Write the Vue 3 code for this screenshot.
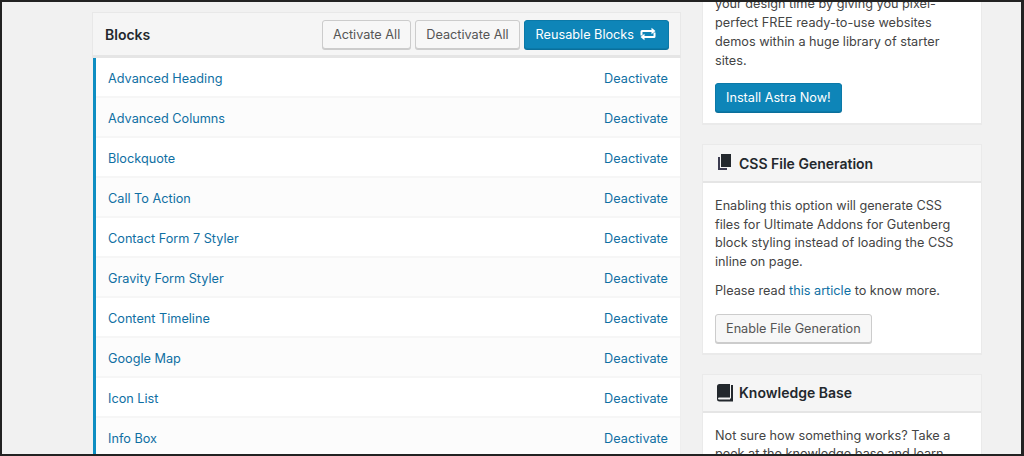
<template>
  <div class="frame">
    <div class="page">
      <main class="blocks">
        <header class="blocks-head">
          <h2>Blocks</h2>
          <div class="actions">
            <button class="btn">Activate All</button>
            <button class="btn">Deactivate All</button>
            <button class="btn primary reusable">
              Reusable Blocks
              <svg class="repeat" width="16" height="14" viewBox="0 0 16 14">
                <path d="M0.500 8.500V4.500A1.500 1.500 0 0 1 2 3H11.500V0.800L15.500 4L11.500 7.200V5H2.500V8.500Z" fill="#fff" />
                <path d="M15.500 5.500V9.500A1.500 1.500 0 0 1 14 11H4.500V13.200L0.500 10L4.500 6.800V9H13.500V5.500Z" fill="#fff" />
              </svg>
            </button>
          </div>
        </header>
        <ul class="rows">
          <li v-for="(name, i) in blocks" :key="name" class="row" :class="{ odd: i % 2 === 1 }">
            <a>{{ name }}</a>
            <a>Deactivate</a>
          </li>
        </ul>
      </main>

      <aside class="side">
        <section class="card first">
          <div class="card-body">
            <p>your design time by giving you pixel-perfect FREE ready-to-use websites demos within a huge library of starter sites.</p>
            <button class="btn primary">Install Astra Now!</button>
          </div>
        </section>

        <section class="card">
          <h3 class="card-head">
            <svg width="18" height="18" viewBox="0 0 18 18">
              <path d="M5 0H15V13H5Z" fill="#23282d" />
              <path d="M2 3H4V14H11V16H2Z" fill="#3c3c50" />
            </svg>
            CSS File Generation
          </h3>
          <div class="card-body">
            <p>Enabling this option will generate CSS files for Ultimate Addons for Gutenberg block styling instead of loading the CSS inline on page.</p>
            <p class="more">Please read <a>this article</a> to know more.</p>
            <button class="btn">Enable File Generation</button>
          </div>
        </section>

        <section class="card">
          <h3 class="card-head">
            <svg width="18" height="18" viewBox="0 0 18 18">
              <path d="M1 2.500A2.500 2.500 0 0 1 3.500 0H14V13.500H3.500C2.500 13.500 2 14 2 14.500C2 15 2.500 15.500 3.500 15.500H14V14.500H15V1H17V17.500H3.500A2.500 2.500 0 0 1 1 15Z" fill="#23282d" />
            </svg>
            Knowledge Base
          </h3>
          <div class="card-body">
            <p>Not sure how something works? Take a peek at the knowledge base and learn more about it.</p>
          </div>
        </section>
      </aside>
    </div>
  </div>
</template>

<script setup>
const blocks = [
  'Advanced Heading',
  'Advanced Columns',
  'Blockquote',
  'Call To Action',
  'Contact Form 7 Styler',
  'Gravity Form Styler',
  'Content Timeline',
  'Google Map',
  'Icon List',
  'Info Box',
]
</script>

<style>
html,
body {
  margin: 0;
  background: #f1f1f1;
}
</style>

<style scoped>
.frame {
  box-sizing: border-box;
  width: 1024px;
  height: 456px;
  overflow: hidden;
  border: solid #222;
  border-width: 2px 3px 2px 2px;
  background: #f1f1f1;
  font-family: Inter, "Liberation Sans", sans-serif;
  font-size: 12.7px;
  color: #444;
}

.page {
  display: flex;
  align-items: flex-start;
  gap: 21px;
  padding: 10px 0 0 90px;
}

.blocks {
  width: 589px;
  flex-shrink: 0;
}

.blocks-head {
  box-sizing: border-box;
  height: 46px;
  display: flex;
  align-items: center;
  justify-content: space-between;
  padding: 0 11px 0 12px;
  background: #f5f5f5;
  border: 1px solid #e8e8e8;
  border-bottom: 3px solid #e5e5e5;
}

h2 {
  margin: 0;
  font-size: 14px;
  font-weight: 600;
  color: #23282d;
}

.actions {
  display: flex;
  gap: 4px;
}

.btn {
  box-sizing: border-box;
  height: 29px;
  padding: 0 10px;
  font: inherit;
  color: #555;
  background: #f7f7f7;
  border: 1px solid #ccc;
  border-radius: 3px;
  box-shadow: 0 1px 0 #ccc;
  white-space: nowrap;
  display: inline-flex;
  align-items: center;
}

.btn.primary {
  color: #fff;
  background: #0e85b8;
  border-color: #0b79a8;
  box-shadow: 0 1px 0 #0a6f9b;
}

.btn.reusable {
  padding: 0 12px 0 11px;
}

.repeat {
  margin-left: 6px;
}

.rows {
  list-style: none;
  margin: 0 0 0 1px;
  padding: 0;
  background: #fff;
  border-left: 3px solid #0e8ec2;
  border-right: 1px solid #eee;
}

.row {
  box-sizing: border-box;
  height: 40px;
  display: flex;
  align-items: center;
  justify-content: space-between;
  padding: 0 12px;
  box-shadow: inset 0 -2px 0 #f6f6f6;
}

.row.odd {
  background: #fcfcfc;
}

a {
  color: #0f6fa3;
}

.side {
  width: 280px;
  margin-top: -3px;
  display: flex;
  flex-direction: column;
  gap: 19px;
}

.card {
  background: #fff;
  border: 1px solid #eaeaea;
  border-bottom-width: 2px;
}

.card.first {
  border-top: 0;
  margin-top: -15px;
}

.card-head {
  box-sizing: border-box;
  height: 38px;
  margin: 0;
  display: flex;
  align-items: center;
  gap: 5px;
  padding: 0 13px;
  font-size: 14px;
  font-weight: 600;
  color: #23282d;
  background: #f5f5f5;
  border-bottom: 2px solid #e5e5e5;
}

.card-body {
  padding: 14px 12px 10px;
}

.card.first .card-body {
  padding: 0 12px 11px;
}

p {
  margin: 0 0 11px;
  line-height: 18.500px;
}

.card.first p {
  margin-bottom: 13px;
  line-height: 19px;
}

p.more {
  margin-bottom: 13px;
}
</style>
